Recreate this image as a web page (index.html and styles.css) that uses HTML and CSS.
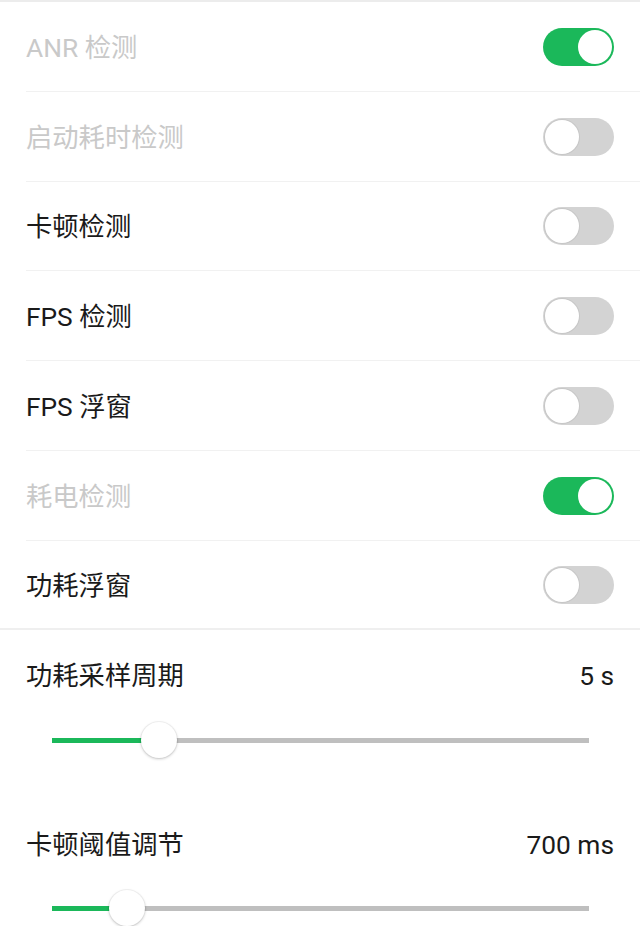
FILE: index.html
```html
<!DOCTYPE html>
<html lang="zh-CN">
<head>
<meta charset="utf-8">
<title>设置</title>
<link rel="stylesheet" href="styles.css">
</head>
<body>
<div class="page">
  <ul class="list">
    <li class="row disabled"><span class="label">ANR 检测</span><span class="toggle on"><span class="knob"></span></span></li>
    <li class="row disabled"><span class="label">启动耗时检测</span><span class="toggle"><span class="knob"></span></span></li>
    <li class="row"><span class="label">卡顿检测</span><span class="toggle"><span class="knob"></span></span></li>
    <li class="row"><span class="label">FPS 检测</span><span class="toggle"><span class="knob"></span></span></li>
    <li class="row"><span class="label">FPS 浮窗</span><span class="toggle"><span class="knob"></span></span></li>
    <li class="row disabled"><span class="label">耗电检测</span><span class="toggle on"><span class="knob"></span></span></li>
    <li class="row"><span class="label">功耗浮窗</span><span class="toggle"><span class="knob"></span></span></li>
  </ul>
  <section class="sliders">
    <div class="slider-block">
      <div class="slider-head"><span class="label">功耗采样周期</span><span class="value">5 s</span></div>
      <div class="seek"><div class="track"><div class="fill" style="width:19.9%"></div><div class="thumb" style="left:19.9%"></div></div></div>
    </div>
    <div class="slider-block second">
      <div class="slider-head"><span class="label">卡顿阈值调节</span><span class="value">700 ms</span></div>
      <div class="seek"><div class="track"><div class="fill" style="width:14%"></div><div class="thumb" style="left:14%"></div></div></div>
    </div>
  </section>
</div>
</body>
</html>
```
FILE: styles.css
```css
* { box-sizing: border-box; }
html, body { margin: 0; padding: 0; background: #ffffff; }
body {
  font-family: Roboto, "Noto Sans CJK SC", sans-serif;
  font-size: 26.3px;
  color: #1a1a1a;
}
.page {
  width: 640px;
  border-top: 2px solid #ececec;
}
.list {
  list-style: none;
  margin: 0;
  padding: 0;
}
.row {
  height: 89.75px;
  margin-left: 26px;
  padding-right: 26px;
  display: flex;
  align-items: center;
  justify-content: space-between;
  border-bottom: 1px solid #f1f1f1;
}
.row:last-child {
  margin-left: 0;
  padding-left: 26px;
  border-bottom: 2px solid #efefef;
}
.row .label {
  padding-top: 3px;
}
.label {
  line-height: 36px;
}
.row.disabled .label { color: #c9c9c9; }
.toggle {
  width: 71px;
  height: 38px;
  border-radius: 19px;
  background: #d3d3d3;
  padding: 2px;
  display: flex;
  justify-content: flex-start;
  margin-top: 1px;
}
.toggle .knob {
  width: 34px;
  height: 34px;
  border-radius: 50%;
  background: #ffffff;
  box-shadow: 0 0 0 1px rgba(0,0,0,0.06);
}
.toggle.on {
  background: #1bb85a;
  justify-content: flex-end;
}
.toggle.on .knob { box-shadow: none; }
.sliders {
  padding: 28px 0 0;
}
.slider-head {
  display: flex;
  justify-content: space-between;
  align-items: center;
  padding: 0 26px;
  line-height: 36px;
}
.value { color: #1a1a1a; }
.seek {
  height: 36px;
  margin-top: 28px;
  padding: 0 51px 0 52px;
  display: flex;
  align-items: center;
}
.track {
  position: relative;
  width: 100%;
  height: 5px;
  background: #bfbfbf;
}
.fill {
  height: 100%;
  background: #1bb85a;
}
.thumb {
  position: absolute;
  top: 50%;
  width: 36px;
  height: 36px;
  margin: -18px 0 0 -18px;
  border-radius: 50%;
  background: #ffffff;
  box-shadow: 0 1px 3px rgba(0,0,0,0.22), 0 0 0 1px rgba(0,0,0,0.04);
}
.slider-block.second { margin-top: 69px; }
.slider-block.second .seek { margin-top: 27px; }
```
